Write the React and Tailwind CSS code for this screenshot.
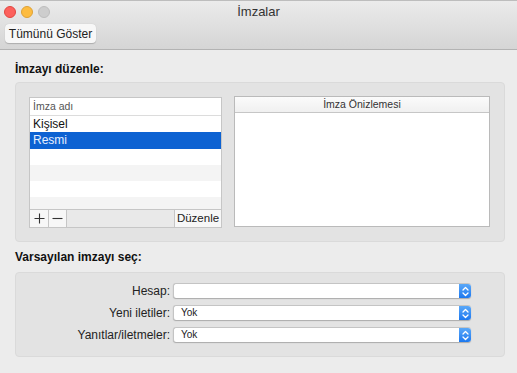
import React from 'react';

const Stepper = () => (
  <div className="w-[12px] h-full rounded-r-[3px] bg-gradient-to-b from-[#5aa8f8] to-[#1b78ef] flex items-center justify-center">
    <svg width="7" height="11" viewBox="0 0 7 11" fill="none" stroke="white" strokeWidth="1.3" strokeLinecap="round" strokeLinejoin="round">
      <path d="M1 4 L3.5 1.5 L6 4" />
      <path d="M1 7 L3.5 9.5 L6 7" />
    </svg>
  </div>
);

const SelectRow = ({ label, value }) => (
  <div className="flex items-center h-[15px]">
    <div className="w-[157px] pr-[3px] text-right text-[12px] text-[#222]">{label}</div>
    <div className="w-[298px] h-[15px] flex bg-white rounded-[3px] border-t border-l border-[#c4c4c4] shadow-[0_1px_1px_rgba(0,0,0,0.25)]">
      <div className="flex-1 pl-[7px] text-[10px] leading-[14px] text-[#222]">{value}</div>
      <Stepper />
    </div>
  </div>
);

const App = () => {
  const rows = ['bg-white', 'bg-[#f4f4f4]', 'bg-white', 'bg-[#f4f4f4]'];

  return (
    <div className="w-[517px] h-[373px] bg-[#ececec] overflow-hidden font-['Liberation_Sans',Arial,sans-serif] text-[#222]">
      {/* Title bar + toolbar */}
      <div className="h-[50px] border-t border-[#bdbdbd] border-b border-b-[#b3b3b3] bg-gradient-to-b from-[#ebebeb] to-[#d5d5d5]">
        <div className="relative h-[22px] flex items-center px-[4px] gap-[5px]">
          <div className="w-[12px] h-[12px] rounded-full bg-[#fc605c] border border-[#e2463f]" />
          <div className="w-[12px] h-[12px] rounded-full bg-[#fdbc40] border border-[#dea236]" />
          <div className="w-[12px] h-[12px] rounded-full bg-[#cdcdcd] border border-[#bdbdbd]" />
          <div className="absolute inset-0 flex items-center justify-center text-[13px] text-[#333]">İmzalar</div>
        </div>
        <div className="px-[5px] pt-[1px]">
          <div className="w-[91px] h-[19px] rounded-[4px] bg-[#f7f7f7] shadow-[0_0.5px_1px_rgba(0,0,0,0.2)] flex items-center justify-center text-[12px] text-[#222]">
            Tümünü Göster
          </div>
        </div>
      </div>

      {/* Edit signature */}
      <div className="px-[15px]">
        <div className="pt-[12px] text-[12px] leading-[15px] font-bold text-[#111]">İmzayı düzenle:</div>
        <div className="mt-[5px] w-[490px] h-[160px] rounded-[4px] bg-[#e3e3e3] border border-[#dadada] flex gap-[12px] pl-[13px] pt-[13px]">
          {/* List */}
          <div className="w-[193px] h-[131px] mt-[1px] flex flex-col border border-[#c6c6c6] bg-white">
            <div className="h-[18px] border-b border-[#dcdcdc] pl-[3px] text-[10.5px] leading-[17px] text-[#555]">İmza adı</div>
            <div className="h-[16px] pl-[3px] text-[12px] leading-[16px] text-[#111]">Kişisel</div>
            <div className="h-[17px] pl-[3px] text-[12px] leading-[17px] bg-[#0d62d2] text-[#e6efff]">Resmi</div>
            {rows.map((c, i) => (
              <div key={i} className={`${c} ${i === 3 ? 'h-[12px]' : 'h-[16px]'}`} />
            ))}
            <div className="flex-1 flex border-t border-[#c6c6c6] bg-[#e9e9e9]">
              <div className="w-[19px] border-r border-[#c6c6c6] bg-[#f7f7f7] flex items-center justify-center">
                <svg width="11" height="11" viewBox="0 0 11 11" stroke="#333" strokeWidth="1.1"><path d="M5.5 0.5 V10.5 M0.5 5.5 H10.5" /></svg>
              </div>
              <div className="w-[18px] border-r border-[#c6c6c6] bg-[#f7f7f7] flex items-center justify-center">
                <svg width="11" height="11" viewBox="0 0 11 11" stroke="#333" strokeWidth="1.1"><path d="M0.5 5.5 H10.5" /></svg>
              </div>
              <div className="flex-1" />
              <div className="w-[47px] border-l border-[#c6c6c6] bg-[#f7f7f7] flex items-center justify-center text-[11.5px] text-[#222]">Düzenle</div>
            </div>
          </div>
          {/* Preview */}
          <div className="w-[256px] h-[131px] flex flex-col border border-[#bababa] bg-white">
            <div className="h-[16px] border-b border-[#c6c6c6] bg-gradient-to-b from-[#fbfbfb] to-[#f0f0f0] text-center text-[10.5px] leading-[15px] text-[#333]">İmza Önizlemesi</div>
            <div className="flex-1 bg-white" />
          </div>
        </div>

        {/* Default signature */}
        <div className="pt-[8px] text-[12px] leading-[15px] font-bold text-[#111]">Varsayılan imzayı seç:</div>
        <div className="mt-[7px] w-[490px] h-[85px] rounded-[4px] bg-[#e3e3e3] border border-[#dadada] flex flex-col gap-[7px] pt-[10px]">
          <SelectRow label="Hesap:" value="" />
          <SelectRow label="Yeni iletiler:" value="Yok" />
          <SelectRow label="Yanıtlar/iletmeler:" value="Yok" />
        </div>
      </div>
    </div>
  );
};

export default App;
